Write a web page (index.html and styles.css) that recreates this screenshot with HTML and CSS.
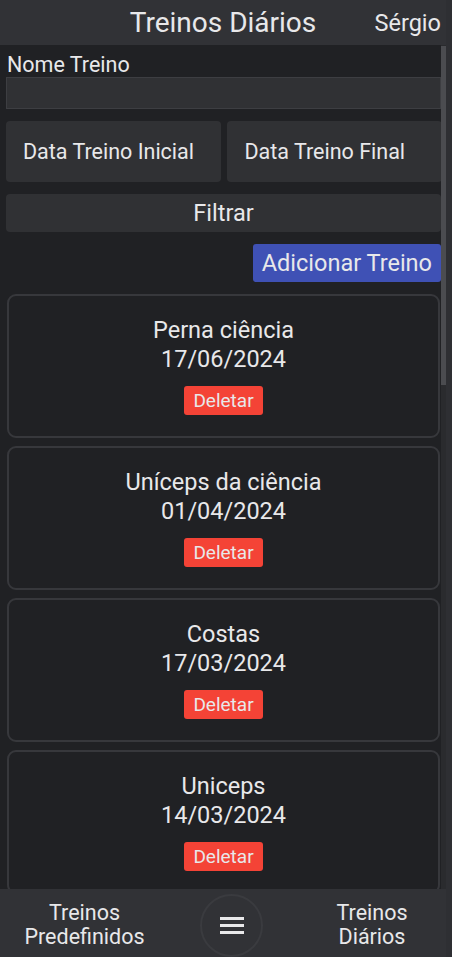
FILE: index.html
```html
<!DOCTYPE html>
<html lang="pt">
<head>
<meta charset="utf-8">
<title>Treinos Diários</title>
<link rel="stylesheet" href="styles.css">
</head>
<body>
<div class="app">
  <header class="topbar">
    <span></span>
    <h1 class="title">Treinos Diários</h1>
    <span class="user">Sérgio</span>
  </header>
  <div class="main">
    <div class="content">
      <label class="label">Nome Treino</label>
      <div class="input"></div>
      <div class="dates">
        <button class="date-btn">Data Treino Inicial</button>
        <button class="date-btn">Data Treino Final</button>
      </div>
      <button class="filter">Filtrar</button>
      <div class="add-row"><button class="add">Adicionar Treino</button></div>
      <div class="cards">
        <div class="card">
          <div class="card-title">Perna ciência</div>
          <div class="card-date">17/06/2024</div>
          <button class="delete">Deletar</button>
        </div>
        <div class="card">
          <div class="card-title">Uníceps da ciência</div>
          <div class="card-date">01/04/2024</div>
          <button class="delete">Deletar</button>
        </div>
        <div class="card">
          <div class="card-title">Costas</div>
          <div class="card-date">17/03/2024</div>
          <button class="delete">Deletar</button>
        </div>
        <div class="card">
          <div class="card-title">Uniceps</div>
          <div class="card-date">14/03/2024</div>
          <button class="delete">Deletar</button>
        </div>
      </div>
    </div>
    <div class="scrollbar"><div class="thumb"></div></div>
  </div>
  <nav class="bottom">
    <div class="nav-item">Treinos<br>Predefinidos</div>
    <div class="nav-mid">
      <div class="menu-btn">
        <span class="bar"></span><span class="bar"></span><span class="bar"></span>
      </div>
    </div>
    <div class="nav-item nav-right">Treinos<br>Diários</div>
  </nav>
</div>
<div class="edge"></div>
</body>
</html>
```
FILE: styles.css
```css
* { box-sizing: border-box; }
html, body { margin: 0; padding: 0; }
body {
  width: 452px;
  height: 957px;
  background: #202124;
  color: #e8e8ea;
  font-family: Roboto, "Liberation Sans", sans-serif;
  display: flex;
  overflow: hidden;
}
.app {
  width: 446px;
  height: 957px;
  display: flex;
  flex-direction: column;
}
.edge {
  width: 6px;
  background: #2e2f33;
}
.topbar {
  height: 45px;
  flex: none;
  background: #313236;
  display: grid;
  grid-template-columns: 1fr auto 1fr;
  align-items: center;
}
.title {
  margin: 0;
  font-weight: 400;
  font-size: 28px;
  line-height: 32px;
  padding-top: 1px;
}
.user {
  justify-self: end;
  font-size: 23.5px;
  padding-right: 5px;
  padding-top: 1px;
}
.main {
  flex: 1;
  min-height: 0;
  display: flex;
  overflow: hidden;
}
.content {
  flex: 1;
  padding-left: 6px;
  min-width: 0;
}
.scrollbar {
  width: 5px;
  background: #2a2b2e;
  padding-top: 1px;
}
.thumb {
  height: 339px;
  background: #4b4c50;
}
.label {
  display: block;
  margin-top: 8px;
  font-size: 21.5px;
  line-height: 24px;
  padding-left: 1px;
}
.input {
  height: 32px;
  background: #303134;
  border: 1px solid #3d3e42;
}
button {
  font-family: inherit;
  color: inherit;
  border: none;
  cursor: pointer;
}
.dates {
  margin-top: 12px;
  display: flex;
  gap: 6px;
  margin-right: -1px;
}
.date-btn {
  flex: 1;
  height: 61px;
  background: #303134;
  border-radius: 4px;
  font-size: 21.5px;
  text-align: left;
  padding: 0 0 0 17px;
  white-space: nowrap;
}
.date-btn + .date-btn { padding-left: 18px; }
.filter {
  display: block;
  width: 100%;
  margin-top: 12px;
  height: 38px;
  background: #303134;
  border-radius: 4px;
  font-size: 23.5px;
  padding: 0;
}
.add-row {
  margin-top: 12px;
  display: flex;
  justify-content: flex-end;
}
.add {
  height: 38px;
  background: #3f51b5;
  border-radius: 3px;
  font-size: 23.5px;
  padding: 0 9px;
}
.cards {
  margin-top: 12px;
  display: flex;
  flex-direction: column;
  gap: 8px;
  padding: 0 1px;
}
.card {
  height: 144px;
  flex: none;
  border: 2px solid #37383c;
  border-radius: 9px;
  padding-top: 20px;
  display: flex;
  flex-direction: column;
  align-items: center;
}
.card-title, .card-date {
  font-size: 23.5px;
  line-height: 29px;
}
.delete {
  margin-top: 12px;
  height: 29px;
  background: #f44336;
  border-radius: 3px;
  font-size: 19px;
  padding: 0 9px;
}
.bottom {
  height: 68px;
  flex: none;
  background: #313236;
  display: grid;
  grid-template-columns: 169px 125px 1fr;
  align-items: center;
}
.nav-item {
  text-align: center;
  font-size: 21.5px;
  line-height: 24px;
  margin-top: 4px;
}
.nav-right { padding-left: 4px; }
.nav-mid {
  display: flex;
  justify-content: center;
}
.menu-btn {
  margin-top: 5px;
  width: 63px;
  height: 63px;
  border-radius: 50%;
  border: 2px solid #3a3b3f;
  display: flex;
  flex-direction: column;
  align-items: center;
  justify-content: center;
  gap: 4px;
}
.bar {
  width: 24px;
  height: 3px;
  background: #e8e8ea;
}
```
